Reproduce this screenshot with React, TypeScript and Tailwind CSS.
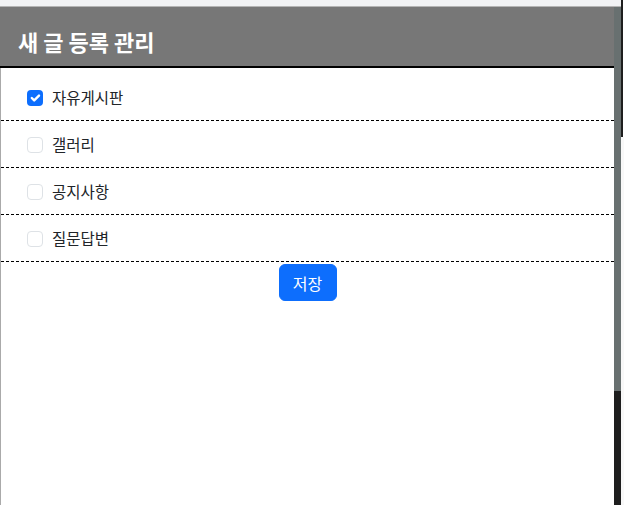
const boards = [
  { name: "자유게시판", checked: true },
  { name: "갤러리", checked: false },
  { name: "공지사항", checked: false },
  { name: "질문답변", checked: false },
];

function CheckBox({ checked }: { checked: boolean }) {
  if (checked) {
    return (
      <span className="w-4 h-4 rounded-[4px] bg-[#0d6efd] flex items-center justify-center shrink-0">
        <svg viewBox="0 0 20 20" className="w-4 h-4">
          <path
            d="M6 10l3 3l6-6"
            fill="none"
            stroke="#fff"
            strokeWidth="3"
            strokeLinecap="round"
            strokeLinejoin="round"
          />
        </svg>
      </span>
    );
  }
  return (
    <span className="block w-4 h-4 rounded-[4px] border border-[#dee2e6] bg-white shrink-0" />
  );
}

export default function App() {
  return (
    <div
      className="w-[624px] h-[505px] flex bg-white overflow-hidden"
      style={{ fontFamily: '"Noto Sans CJK KR", "Noto Sans", sans-serif' }}
    >
      <div className="w-[621px] flex flex-col">
        {/* window strip */}
        <div className="h-[6px] bg-[#f1f2f4] shrink-0" />
        <div className="h-px bg-[#b4b4b4] shrink-0" />

        <div className="flex flex-1">
          <div className="w-[614px] flex flex-col">
            <div className="h-[61px] bg-[#777777] border-b-2 border-black flex items-center pl-[18px] pt-[8px]">
              <h1 className="text-white text-[22px] font-bold leading-7">새 글 등록 관리</h1>
            </div>

            <div className="flex-1 border-l border-[#aaaaaa] pt-[6px] text-[#212529]">
              {boards.map((b) => (
                <div
                  key={b.name}
                  className="flex items-center h-[47px] pl-[26px] border-b border-dashed border-black"
                >
                  <div className="flex pt-[2px]">
                    <CheckBox checked={b.checked} />
                  </div>
                  <span className="ml-[9px] text-[15.5px] leading-6">{b.name}</span>
                </div>
              ))}
              <div className="flex justify-center mt-[2px]">
                <button className="w-[58px] h-[37px] rounded-[6px] border border-[#0d6efd] bg-[#0d6efd] text-white text-[16px]">
                  저장
                </button>
              </div>
            </div>
          </div>

          {/* scrollbar */}
          <div className="w-[7px] flex flex-col">
            <div className="h-[384px] bg-[#687070]" />
            <div className="flex-1 bg-[#1e1e1e]" />
          </div>
        </div>
      </div>

      <div className="w-[3px] flex flex-col">
        <div className="h-[137px] bg-[#1e1e1e] w-[2px]" />
        <div className="flex-1 bg-[#f8f8f8]" />
      </div>
    </div>
  );
}
